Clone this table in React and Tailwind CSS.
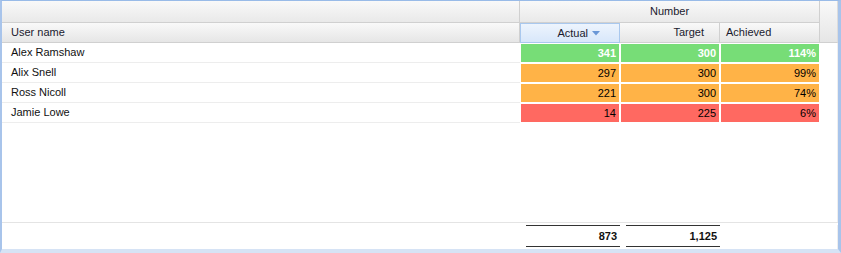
import React from "react";

const rows = [
  { name: "Alex Ramshaw", actual: "341", target: "300", achieved: "114%", bg: "bg-[#77dd77]", text: "text-white font-bold" },
  { name: "Alix Snell", actual: "297", target: "300", achieved: "99%", bg: "bg-[#ffb347]", text: "text-black" },
  { name: "Ross Nicoll", actual: "221", target: "300", achieved: "74%", bg: "bg-[#ffb347]", text: "text-black" },
  { name: "Jamie Lowe", actual: "14", target: "225", achieved: "6%", bg: "bg-[#ff6961]", text: "text-black" },
];

function Cell({ bg, text, children }) {
  return (
    <div className={`w-[100px] h-full border-x border-y border-white ${bg} ${text} flex items-center justify-end pr-[3px]`}>
      {children}
    </div>
  );
}

export default function App() {
  return (
    <div className="w-[841px] h-[253px] bg-white border-l-2 border-l-[#a8c4eb] border-t border-t-[#99bbe8] border-r-[3px] border-r-[#a8c4eb] border-b-4 border-b-[#d6e3f5] flex flex-col font-['Liberation_Sans',Arial,sans-serif] text-[11px] text-[#111] overflow-hidden">
      {/* header */}
      <div className="flex h-[42px] shrink-0">
        <div className="w-[518px] flex flex-col border-r border-[#d0d0d0]">
          <div className="h-[22px] border-b border-[#d0d0d0] bg-linear-to-b from-[#f9f9f9] to-[#e9e9e9]" />
          <div className="h-[20px] border-b border-[#d0d0d0] bg-linear-to-b from-[#f9f9f9] to-[#e6e6e6] flex items-center pl-[9px] text-[#1a1a2e]">
            User name
          </div>
        </div>
        <div className="w-[300px] flex flex-col">
          <div className="h-[22px] border-b border-r border-[#d0d0d0] bg-linear-to-b from-[#f9f9f9] to-[#e9e9e9] flex items-center justify-center text-[#1a1a2e]">
            Number
          </div>
          <div className="h-[20px] flex">
            <div className="w-[100px] border border-[#a9c8ee] bg-linear-to-b from-[#edf4fd] to-[#d8e7fa] flex items-center justify-end pr-[19px] text-[#1a1a2e]">
              <span>Actual</span>
              <svg width="8" height="5" viewBox="0 0 8 5" className="ml-[4px] mt-[1px]">
                <path d="M0 0 L8 0 L4 4.5 Z" fill="#6a97d6" />
              </svg>
            </div>
            <div className="w-[100px] border-r border-b border-[#d0d0d0] bg-linear-to-b from-[#f9f9f9] to-[#e6e6e6] flex items-center justify-end pr-[15px] text-[#1a1a2e]">
              Target
            </div>
            <div className="w-[100px] border-r border-b border-[#d0d0d0] bg-linear-to-b from-[#f9f9f9] to-[#e6e6e6] flex items-center pl-[6px] text-[#1a1a2e]">
              Achieved
            </div>
          </div>
        </div>
        <div className="flex-1 border-b border-[#d0d0d0] bg-linear-to-b from-[#f9f9f9] to-[#e6e6e6] border-r border-r-[#dcdcdc]" />
      </div>

      {/* rows */}
      {rows.map((r) => (
        <div key={r.name} className="flex h-[20px] shrink-0">
          <div className="w-[518px] border-b border-[#ededed] flex items-center pl-[9px]">{r.name}</div>
          <Cell bg={r.bg} text={r.text}>{r.actual}</Cell>
          <Cell bg={r.bg} text={r.text}>{r.target}</Cell>
          <Cell bg={r.bg} text={r.text}>{r.achieved}</Cell>
          <div className="flex-1 border-r border-[#eeeeee]" />
        </div>
      ))}

      <div className="flex-1 border-r border-[#eeeeee]" />

      {/* footer */}
      <div className="h-[27px] shrink-0 border-t border-[#e4e4e4] flex pt-[2px] font-bold">
        <div className="w-[518px]" />
        <div className="w-[100px] pl-[6px]">
          <div className="h-[22px] border-y border-[#333] flex items-center justify-end pr-[3px]">873</div>
        </div>
        <div className="w-[100px] pl-[6px]">
          <div className="h-[22px] border-y border-[#333] flex items-center justify-end pr-[3px]">1,125</div>
        </div>
        <div className="flex-1 border-r border-[#eeeeee]" />
      </div>
    </div>
  );
}
